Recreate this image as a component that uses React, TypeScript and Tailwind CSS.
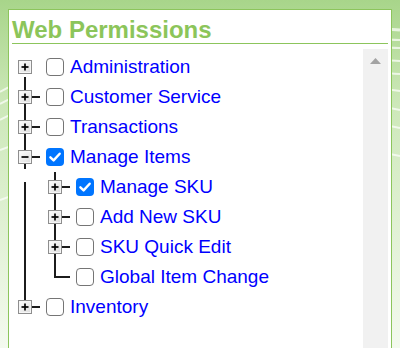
import React from "react";

type Line = "none" | "first" | "tee" | "last" | "pipe" | "pipeGap" | "teeShort" | "teeFull" | "corner";
type Box = "plus" | "minus" | null;

function Cell({ line, box }: { line: Line; box: Box }) {
  const stroke = "#1c1c1c";
  return (
    <svg width="30" height="30" viewBox="0 0 30 30" className="shrink-0">
      <defs>
        <linearGradient id="boxfill" x1="0" y1="0" x2="1" y2="1">
          <stop offset="0" stopColor="#ffffff" />
          <stop offset="1" stopColor="#dcdcdc" />
        </linearGradient>
      </defs>
      {line === "first" && <line x1="15" y1="25" x2="15" y2="30" stroke={stroke} strokeWidth="2" />}
      {(line === "tee" || line === "pipe") && <line x1="15" y1="0" x2="15" y2="30" stroke={stroke} strokeWidth="2" />}
      {line === "teeShort" && <line x1="15" y1="0" x2="15" y2="27" stroke={stroke} strokeWidth="2" />}
      {line === "teeFull" && <line x1="15" y1="-3" x2="15" y2="30" stroke={stroke} strokeWidth="2" />}
      {line === "pipeGap" && <line x1="15" y1="10" x2="15" y2="30" stroke={stroke} strokeWidth="2" />}
      {(line === "last" || line === "corner") && <line x1="15" y1="0" x2="15" y2="16" stroke={stroke} strokeWidth="2" />}
      {(line === "tee" || line === "last" || line === "teeShort" || line === "teeFull") && (
        <line x1="15" y1="15" x2="30" y2="15" stroke={stroke} strokeWidth="2" />
      )}
      {line === "corner" && <line x1="14" y1="15" x2="30" y2="15" stroke={stroke} strokeWidth="2" />}
      {box && (
        <g>
          <rect x="8.5" y="8.5" width="13" height="13" fill="url(#boxfill)" stroke="#8e8e8e" strokeWidth="1" />
          <rect x="9.5" y="9.5" width="11" height="11" fill="none" stroke="#f6f6f6" strokeWidth="1" />
          <line x1="11.5" y1="15" x2="18.5" y2="15" stroke="#000" strokeWidth="1.7" />
          {box === "plus" && <line x1="15" y1="11.5" x2="15" y2="18.5" stroke="#000" strokeWidth="1.7" />}
        </g>
      )}
    </svg>
  );
}

function Check({ checked }: { checked?: boolean }) {
  return checked ? (
    <span className="ml-[6px] flex h-[18px] w-[18px] shrink-0 items-center justify-center rounded-[4px] bg-[#0075ff]">
      <svg width="14" height="14" viewBox="0 0 14 14">
        <path d="M2.4 7.3 L5.6 10.4 L11.7 3.7" fill="none" stroke="#fff" strokeWidth="2.4" strokeLinecap="round" strokeLinejoin="round" />
      </svg>
    </span>
  ) : (
    <span className="ml-[6px] h-[18px] w-[18px] shrink-0 rounded-[4px] border-[1.5px] border-[#757575] bg-white" />
  );
}

type Row = { label: string; cells: { line: Line; box: Box }[]; checked?: boolean };

const rows: Row[] = [
  { label: "Administration", cells: [{ line: "first", box: "plus" }] },
  { label: "Customer Service", cells: [{ line: "tee", box: "plus" }] },
  { label: "Transactions", cells: [{ line: "tee", box: "plus" }] },
  { label: "Manage Items", cells: [{ line: "teeShort", box: "minus" }], checked: true },
  { label: "Manage SKU", cells: [{ line: "pipeGap", box: null }, { line: "teeFull", box: "plus" }], checked: true },
  { label: "Add New SKU", cells: [{ line: "pipe", box: null }, { line: "tee", box: "plus" }] },
  { label: "SKU Quick Edit", cells: [{ line: "pipe", box: null }, { line: "tee", box: "plus" }] },
  { label: "Global Item Change", cells: [{ line: "pipe", box: null }, { line: "corner", box: null }] },
  { label: "Inventory", cells: [{ line: "last", box: "plus" }] },
];

function Background() {
  return (
    <svg className="absolute inset-0 h-full w-full" viewBox="0 0 400 348" preserveAspectRatio="none">
      <defs>
        <linearGradient id="bg" x1="0" y1="0" x2="0" y2="1">
          <stop offset="0" stopColor="#a8d58a" />
          <stop offset="0.3" stopColor="#cde8b9" />
          <stop offset="1" stopColor="#f4faef" />
        </linearGradient>
      </defs>
      <rect width="400" height="348" fill="url(#bg)" />
      <g fill="none" stroke="#ffffff" strokeOpacity="0.7" strokeWidth="2">
        <path d="M0 92 C 10 86, 20 82, 30 80" />
        <path d="M0 104 C 10 98, 20 95, 30 94" />
        <path d="M0 120 C 10 114, 20 111, 30 110" />
        <path d="M0 150 C 10 146, 20 144, 30 143" />
        <path d="M0 200 C 10 196, 20 194, 30 193" />
        <path d="M370 30 C 380 29, 390 29, 400 30" strokeWidth="3" />
        <path d="M370 38 C 380 39, 390 40, 400 40" />
        <path d="M370 46 C 380 47, 390 48, 400 48" />
        <path d="M370 58 C 380 60, 390 61, 400 61" />
        <path d="M370 70 C 380 72, 390 74, 400 74" />
        <path d="M370 86 C 380 88, 390 90, 400 91" />
        <path d="M370 104 C 380 106, 390 108, 400 110" />
        <path d="M370 122 C 380 124, 390 126, 400 128" />
        <path d="M370 150 C 380 152, 390 154, 400 156" />
      </g>
    </svg>
  );
}

export default function App() {
  return (
    <div className="relative h-[348px] w-[400px] overflow-hidden font-['Liberation_Sans',Arial,sans-serif]">
      <Background />
      <div className="relative ml-[8px] mt-[9px] h-[380px] w-[384px] border border-[#8cc55c] bg-white px-[3px]">
        <h2 className="border-b border-[#8cc55c] pt-[6px] text-[24px] font-bold leading-[27px] text-[#8cc55a]">
          Web Permissions
        </h2>
        <div className="mt-[5px] flex h-[320px]">
          <ul className="-ml-[2px] flex-1 pt-[3px]">
            {rows.map((r) => (
              <li key={r.label} className="flex h-[30px] items-center">
                {r.cells.map((c, i) => (
                  <Cell key={i} line={c.line} box={c.box} />
                ))}
                <Check checked={r.checked} />
                <span className="ml-[6px] whitespace-nowrap text-[19px] text-[#0000ff]">{r.label}</span>
              </li>
            ))}
          </ul>
          <div className="flex w-[25px] shrink-0 justify-center bg-[#f1f1f1] pt-[9px]">
            <svg width="11" height="6" viewBox="0 0 11 6">
              <polygon points="0,6 5.5,0 11,6" fill="#a3a3a3" />
            </svg>
          </div>
        </div>
      </div>
    </div>
  );
}
